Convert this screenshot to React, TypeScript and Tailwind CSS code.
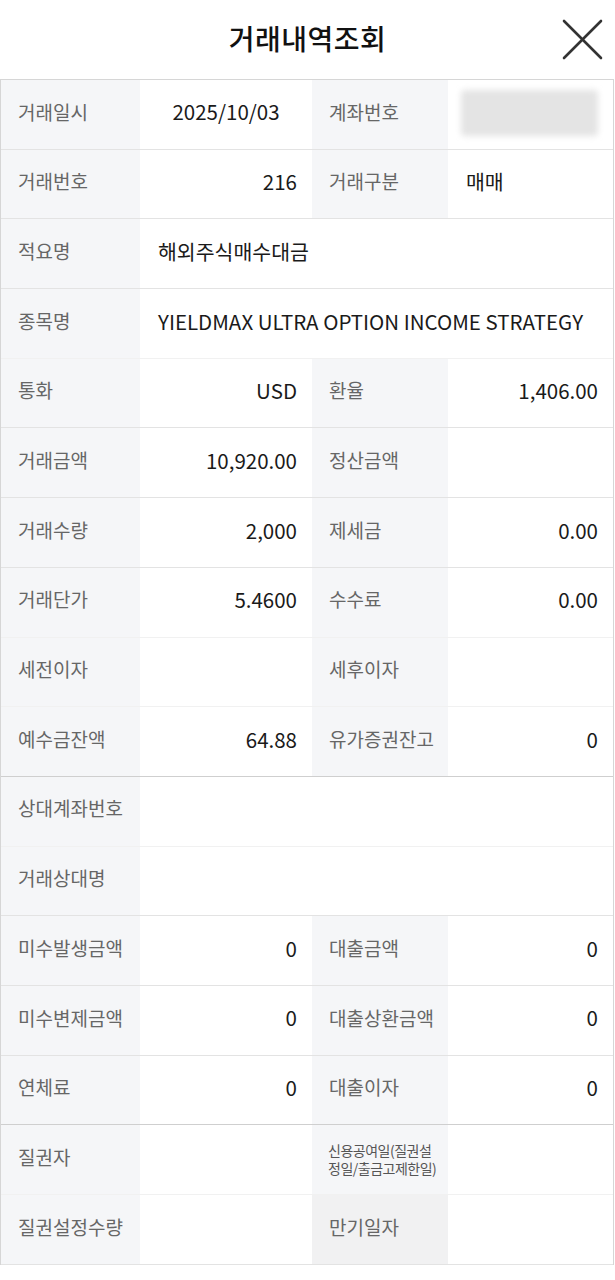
type Cell = {
  label: string;
  value?: string;
  align?: "left" | "right" | "center";
  blur?: boolean;
  small?: boolean;
  dark?: boolean;
};
type Row = { cells: Cell[]; full?: boolean; border: "strong" | "normal" | "faint" };

const rows: Row[] = [
  { cells: [{ label: "거래일시", value: "2025/10/03", align: "center" }, { label: "계좌번호", blur: true }], border: "normal" },
  { cells: [{ label: "거래번호", value: "216" }, { label: "거래구분", value: "매매", align: "left" }], border: "normal" },
  { cells: [{ label: "적요명", value: "해외주식매수대금", align: "left" }], full: true, border: "normal" },
  { cells: [{ label: "종목명", value: "YIELDMAX ULTRA OPTION INCOME STRATEGY", align: "left" }], full: true, border: "faint" },
  { cells: [{ label: "통화", value: "USD" }, { label: "환율", value: "1,406.00" }], border: "normal" },
  { cells: [{ label: "거래금액", value: "10,920.00" }, { label: "정산금액" }], border: "normal" },
  { cells: [{ label: "거래수량", value: "2,000" }, { label: "제세금", value: "0.00" }], border: "normal" },
  { cells: [{ label: "거래단가", value: "5.4600" }, { label: "수수료", value: "0.00" }], border: "faint" },
  { cells: [{ label: "세전이자" }, { label: "세후이자" }], border: "faint" },
  { cells: [{ label: "예수금잔액", value: "64.88" }, { label: "유가증권잔고", value: "0" }], border: "strong" },
  { cells: [{ label: "상대계좌번호" }], full: true, border: "faint" },
  { cells: [{ label: "거래상대명" }], full: true, border: "normal" },
  { cells: [{ label: "미수발생금액", value: "0" }, { label: "대출금액", value: "0" }], border: "normal" },
  { cells: [{ label: "미수변제금액", value: "0" }, { label: "대출상환금액", value: "0" }], border: "normal" },
  { cells: [{ label: "연체료", value: "0" }, { label: "대출이자", value: "0" }], border: "strong" },
  { cells: [{ label: "질권자" }, { label: "신용공여일(질권설정일/출금고제한일)", small: true }], border: "faint" },
  { cells: [{ label: "질권설정수량" }, { label: "만기일자", dark: true }], border: "normal" },
];

const borderClass = {
  strong: "border-b border-[#cfcfcf]",
  normal: "border-b border-[#e3e3e3]",
  faint: "border-b border-[#f1f1f1]",
};

const font = { fontFamily: '"Noto Sans CJK KR", "Noto Sans", sans-serif' };

function Label({ cell, width }: { cell: Cell; width: string }) {
  return (
    <div
      className={`${width} flex h-full shrink-0 items-center whitespace-nowrap ${cell.dark ? "bg-[#f1f1f2]" : "bg-[#f5f6f8]"} ${
        cell.small
          ? "pb-[2px] pl-[16px] text-[14px] leading-[18px] tracking-[-0.5px] text-[#555]"
          : "pb-[5px] pl-[17px] text-[19px] text-[#666]"
      }`}
    >
      {cell.small ? (
        <span>
          신용공여일(질권설
          <br />
          정일/출금고제한일)
        </span>
      ) : (
        cell.label
      )}
    </div>
  );
}

function Value({ cell, width }: { cell: Cell; width: string }) {
  if (cell.blur) {
    return (
      <div className={`${width} flex h-full items-center pb-[2px] pl-[13px] pr-[15px]`}>
        <div className="h-[46px] w-full rounded-sm bg-[#e4e4e4] blur-[3px]" />
      </div>
    );
  }
  const align =
    cell.align === "left"
      ? "justify-start pl-[18px]"
      : cell.align === "center"
        ? "justify-center"
        : "justify-end pr-[15px]";
  return (
    <div className={`${width} flex h-full items-center whitespace-nowrap pb-[5px] text-[20.5px] text-[#1a1a1a] ${align}`}>
      {cell.value}
    </div>
  );
}

export default function App() {
  return (
    <div className="min-h-[1280px] w-[615px] bg-white" style={font}>
      <div className="relative flex h-[79px] items-center justify-center">
        <h1 className="pb-[4px] text-[28px] font-medium tracking-[0.5px] text-[#111]">거래내역조회</h1>
        <svg
          className="absolute right-[12px] top-[19px] h-[41px] w-[41px]"
          viewBox="0 0 41 41"
          fill="none"
          stroke="#333"
          strokeWidth="2.6"
          strokeLinecap="round"
        >
          <line x1="2" y1="2" x2="39" y2="39" />
          <line x1="39" y1="2" x2="2" y2="39" />
        </svg>
      </div>
      <div className="w-[614px] border-x border-t border-[#d6d6d6]">
        {rows.map((row, i) => (
          <div key={i} className={`flex h-[69.7px] ${borderClass[row.border]}`}>
            {row.full ? (
              <>
                <Label cell={row.cells[0]} width="w-[139px]" />
                <Value cell={row.cells[0]} width="flex-1" />
              </>
            ) : (
              <>
                <Label cell={row.cells[0]} width="w-[139px]" />
                <Value cell={row.cells[0]} width="w-[172px]" />
                <Label cell={row.cells[1]} width="w-[136px]" />
                <Value cell={row.cells[1]} width="flex-1" />
              </>
            )}
          </div>
        ))}
      </div>
    </div>
  );
}
